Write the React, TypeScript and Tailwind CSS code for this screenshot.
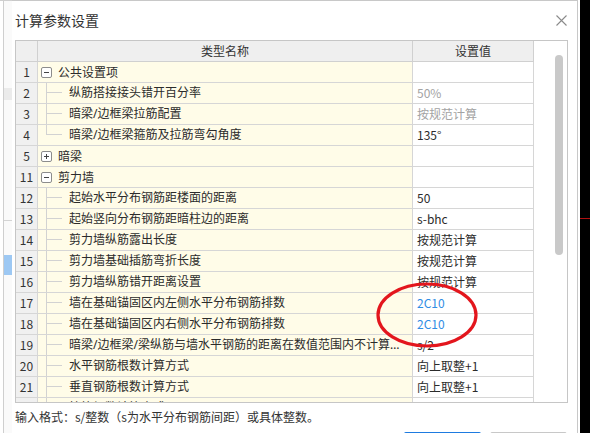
import React from "react";

type Row = {
  n: number;
  label: string;
  value?: string;
  tone?: "gray" | "blue";
  kind: "group" | "child";
  open?: boolean;
  last?: boolean;
};

const rows: Row[] = [
  { n: 1, label: "公共设置项", kind: "group", open: true },
  { n: 2, label: "纵筋搭接接头错开百分率", value: "50%", tone: "gray", kind: "child" },
  { n: 3, label: "暗梁/边框梁拉筋配置", value: "按规范计算", tone: "gray", kind: "child" },
  { n: 4, label: "暗梁/边框梁箍筋及拉筋弯勾角度", value: "135°", kind: "child", last: true },
  { n: 5, label: "暗梁", kind: "group", open: false },
  { n: 11, label: "剪力墙", kind: "group", open: true },
  { n: 12, label: "起始水平分布钢筋距楼面的距离", value: "50", kind: "child" },
  { n: 13, label: "起始竖向分布钢筋距暗柱边的距离", value: "s-bhc", kind: "child" },
  { n: 14, label: "剪力墙纵筋露出长度", value: "按规范计算", kind: "child" },
  { n: 15, label: "剪力墙基础插筋弯折长度", value: "按规范计算", kind: "child" },
  { n: 16, label: "剪力墙纵筋错开距离设置", value: "按规范计算", kind: "child" },
  { n: 17, label: "墙在基础锚固区内左侧水平分布钢筋排数", value: "2C10", tone: "blue", kind: "child" },
  { n: 18, label: "墙在基础锚固区内右侧水平分布钢筋排数", value: "2C10", tone: "blue", kind: "child" },
  { n: 19, label: "暗梁/边框梁/梁纵筋与墙水平钢筋的距离在数值范围内不计算水平钢筋", value: "s/2", kind: "child" },
  { n: 20, label: "水平钢筋根数计算方式", value: "向上取整+1", kind: "child" },
  { n: 21, label: "垂直钢筋根数计算方式", value: "向上取整+1", kind: "child" },
  { n: 22, label: "拉筋根数计算方式", value: "向上取整+1", kind: "child" },
];

const toneClass = {
  gray: "text-[#a3a3a3]",
  blue: "text-[#2f8de4]",
};

function TreeBox({ open }: { open?: boolean }) {
  return (
    <svg width="11" height="11" viewBox="0 0 11 11" className="shrink-0">
      <rect x="0.5" y="0.5" width="10" height="10" rx="1.5" fill="#fff" stroke="#8c8c8c" />
      <line x1="3" y1="5.5" x2="8" y2="5.5" stroke="#444" />
      {!open && <line x1="5.5" y1="3" x2="5.5" y2="8" stroke="#444" />}
    </svg>
  );
}

function TableRow({ row }: { row: Row }) {
  return (
    <div className="grid h-[21px] grid-cols-[22px_375px_121px]">
      <div className="border-b border-r border-[#d6d6d6] bg-[#f0f0f0] text-center leading-[20px] text-[#333]">
        {row.n}
      </div>
      <div className="flex min-w-0 items-center border-b border-r border-[#d6d6d6] bg-[#fffce8]">
        {row.kind === "group" ? (
          <>
            <div className="ml-[3px]">
              <TreeBox open={row.open} />
            </div>
            <span className="ml-[6px] text-[#2b2b2b]">{row.label}</span>
          </>
        ) : (
          <>
            <div className="ml-[8px] flex h-full w-[16px] shrink-0 flex-col">
              <div className="h-[10px] border-b border-l border-[#d2d2d2]" />
              {!row.last && <div className="flex-1 border-l border-[#d2d2d2]" />}
            </div>
            <span
              className="ml-[7px] min-w-0 truncate pr-[2px] text-[#2b2b2b]"
              style={{ fontFamily: '"Noto Sans", "Noto Sans CJK SC", sans-serif' }}
            >
              {row.label}
            </span>
          </>
        )}
      </div>
      <div
        className={`truncate border-b border-r border-[#d6d6d6] bg-white pl-[4px] leading-[20px] ${
          row.tone ? toneClass[row.tone] : "text-[#2b2b2b]"
        }`}
      >
        {row.value}
      </div>
    </div>
  );
}

export default function App() {
  return (
    <div
      className="relative flex h-[433px] w-[590px] overflow-hidden bg-white text-[12px] [text-spacing-trim:space-all]"
      style={{ fontFamily: '"Noto Sans CJK SC", "Noto Sans", sans-serif' }}
    >
      {/* sliver of the window behind */}
      <div className="flex w-[12px] shrink-0 border-t border-[#cfcfcf]">
        <div className="w-[3px]" />
        <div className="w-px bg-[#cfcfcf]" />
        <div className="flex flex-1 flex-col bg-[#fafafa]">
          <div className="mt-[87px] h-[12px] bg-[#ebebeb]" />
          <div className="mt-[120px] h-px bg-[#d4d4d4]" />
          <div className="mt-[34px] h-[20px] bg-[#9dc8f3]" />
        </div>
      </div>

      {/* dialog */}
      <div className="flex w-[566px] shrink-0 flex-col border-r border-t border-[#c8c8c8] bg-white">
        <div className="flex h-[39px] shrink-0 items-center justify-between pl-[3px] pr-[10px]">
          <span className="text-[14px] text-[#333]">计算参数设置</span>
          <svg width="11" height="11" viewBox="0 0 11 11">
            <path d="M0.5 0.5 L10.5 10.5 M10.5 0.5 L0.5 10.5" stroke="#8a8a8a" strokeWidth="1.1" />
          </svg>
        </div>

        <div className="ml-[3px] flex h-[363px] w-[553px] shrink-0 border border-[#c6c6c6]">
          <div className="flex w-[518px] flex-col">
            <div className="grid h-[21px] shrink-0 grid-cols-[22px_375px_121px] bg-[#efefef] text-[#333]">
              <div className="border-b border-r border-[#d0d0d0]" />
              <div className="border-b border-r border-[#d0d0d0] text-center leading-[20px]">类型名称</div>
              <div className="border-b border-r border-[#d0d0d0] text-center leading-[20px]">设置值</div>
            </div>
            <div className="flex-1 overflow-hidden">
              {rows.map((r) => (
                <TableRow key={r.n} row={r} />
              ))}
            </div>
          </div>
          <div className="flex-1 bg-white">
            <div className="ml-[21px] mt-[14px] h-[200px] w-[8px] rounded-full bg-[#c9c9c9]" />
          </div>
        </div>

        <div className="mt-[5px] h-[18px] whitespace-nowrap pl-[3px] leading-[18px] text-[#333]">
          输入格式：s/整数（s为水平分布钢筋间距）或具体整数。
        </div>

        <div className="mt-[6px] flex justify-end gap-[9px] pr-[10px]">
          <div className="h-[28px] w-[77px] rounded-[2px] bg-[#1e7be0]" />
          <div className="h-[28px] w-[77px] rounded-[2px] border border-[#c8c8c8] bg-white" />
        </div>
      </div>

      <div className="w-[2px] shrink-0" />
      <div className="flex flex-1 flex-col bg-black">
        <div className="mt-[218px] h-px bg-[#b01010]" />
      </div>

      {/* red annotation ring */}
      <svg
        className="pointer-events-none absolute left-[374px] top-[281px]"
        width="110"
        height="70"
        viewBox="0 0 110 70"
      >
        <ellipse cx="53" cy="34" rx="49" ry="31" fill="none" stroke="#e3161d" strokeWidth="3.2" />
      </svg>
    </div>
  );
}
